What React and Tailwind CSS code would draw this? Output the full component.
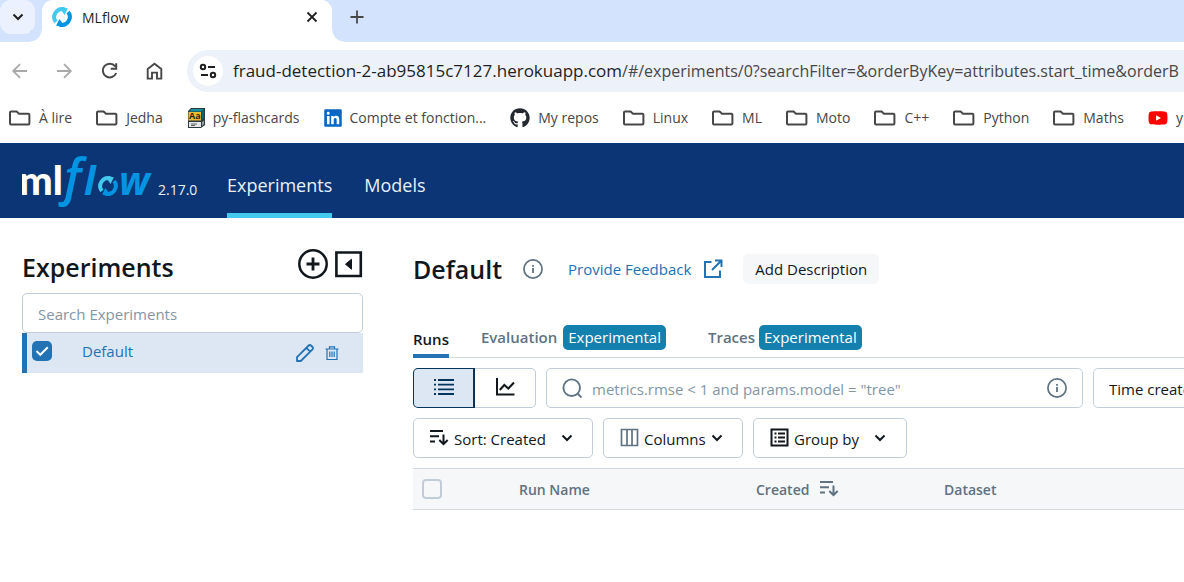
import React from "react";
import { FaGithub, FaLinkedin, FaYoutube } from "react-icons/fa";

function FolderIcon() {
  return (
    <svg className="h-5 w-[22px]" viewBox="0 0 22 20" fill="none" stroke="#474747" strokeWidth="2">
      <path d="M1 4.500a1 1 0 0 1 1-1h5.600l2.400 2.200h9.400a1 1 0 0 1 1 1v8.900a1 1 0 0 1-1 1H2a1 1 0 0 1-1-1z" />
    </svg>
  );
}

function CardsIcon() {
  return (
    <svg className="h-5 w-[18px]" viewBox="0 0 18 20">
      <path d="M4 0h14v17l-4 3H1V3z" fill="#2b3a3c" />
      <path d="M4.500 1H17l-3 2.500H2z" fill="#13929b" />
      <path d="M17 1.500v9l-2 1.500V3.800z" fill="#0a6670" />
      <path d="M1.500 4H14v8.500H1.500z" fill="#f0bb35" />
      <path d="M2 14h12v5H2z" fill="#e8e8e8" />
      <path d="M17 12.500V16l-2 2v-4z" fill="#9aa0a3" />
      <path d="M4 16h6M4 17.500h4" stroke="#5a6164" />
      <text x="2" y="11" fontSize="9" fontWeight="700" fill="#2b2b1a" fontFamily="Open Sans, sans-serif">Aa</text>
    </svg>
  );
}

function Ring({ className, ...rest }) {
  return (
    <svg className={className} viewBox="0 0 20 20" {...rest}>
      <path d="M3.900 15A8 8 0 0 1 12 2.300" fill="none" stroke="#43c9ed" strokeWidth="4" />
      <path d="M11 0l4.800 1.500L12.600 8 9.500 3.800z" fill="#43c9ed" />
      <path d="M16.100 5A8 8 0 0 1 8 17.700" fill="none" stroke="#0194e2" strokeWidth="4" />
      <path d="M9 20l-4.800-1.500L7.400 12l3.100 4.200z" fill="#0194e2" />
    </svg>
  );
}

function Chevron({ className = "h-4 w-4" }) {
  return (
    <svg className={className} viewBox="0 0 16 16" fill="none" stroke="currentColor" strokeWidth="2">
      <path d="M3.500 5.500 8 10l4.500-4.500" />
    </svg>
  );
}

function InfoIcon() {
  return (
    <svg className="h-5 w-5 shrink-0 text-[#5f7281]" viewBox="0 0 20 20" fill="none" stroke="currentColor">
      <circle cx="10" cy="10" r="9.100" strokeWidth="1.700" />
      <path d="M10 9v5M10 6v1.800" strokeWidth="1.800" />
    </svg>
  );
}

function SortIcon() {
  return (
    <svg className="h-5 w-5 shrink-0" viewBox="0 0 20 20" fill="none" stroke="currentColor" strokeWidth="2">
      <path d="M1 3h13M1 8.300h9M1 13.500h5M14.500 6.500V16M10.300 12l4.200 4.200 4.200-4.200" />
    </svg>
  );
}

function Logo() {
  return (
    <svg className="h-[52px] w-[132px]" viewBox="0 0 132 52" role="img" aria-label="mlflow" fontFamily="Open Sans, sans-serif">
      <text x="-3" y="40" fontSize="40" fontWeight="900" fill="#fff" fontFamily="Lato, sans-serif">ml</text>
      <g fill="#0194e2" fontStyle="italic">
        <text x="42" y="40" fontSize="50" fontWeight="600">f</text>
        <text x="62" y="40" fontSize="39" fontWeight="700">l</text>
        <text x="97" y="40" fontSize="39" fontWeight="700">w</text>
      </g>
      <Ring x="76" y="21" width="20" height="20" />
    </svg>
  );
}

const bookmarks = [
  { label: "À lire" },
  { label: "Jedha" },
  { label: "py-flashcards", icon: <CardsIcon /> },
  { label: "Compte et fonction...", icon: <FaLinkedin className="h-5 w-[18px] text-[#0a66c2]" /> },
  { label: "My repos", icon: <FaGithub className="h-5 w-5 text-[#24292f]" /> },
  { label: "Linux" },
  { label: "ML" },
  { label: "Moto" },
  { label: "C++" },
  { label: "Python" },
  { label: "Maths" },
  { label: "y", icon: <FaYoutube className="h-5 w-5 text-[#ff0000]" /> },
];

function Browser() {
  return (
    <div>
      <div className="flex h-[42px] bg-[#d3e3fd]">
        <button aria-label="Search tabs" className="flex h-[34px] w-[35px] items-center justify-center rounded-[11px] bg-[#ebf1fe] text-[#1f1f1f]">
          <Chevron />
        </button>
        <div className="relative ml-[7px] flex w-[290px] items-center rounded-t-[11px] bg-white pb-2 pl-[10px] pr-3">
          <span className="absolute -left-3 bottom-0 h-3 w-3 bg-[radial-gradient(circle_at_0_0,#d3e3fd_11px,#fff_12px)]" />
          <span className="absolute -right-3 bottom-0 h-3 w-3 bg-[radial-gradient(circle_at_100%_0,#d3e3fd_11px,#fff_12px)]" />
          <Ring className="h-5 w-5" />
          <span className="ml-[10px] flex-1 text-[14px] text-[#1f1f1f]">MLflow</span>
          <button aria-label="Close tab" className="flex h-4 w-4 items-center justify-center">
            <svg className="h-4 w-4" viewBox="0 0 16 16" stroke="#1f1f1f" strokeWidth="1.800">
              <path d="M3.500 3.500l9 9M12.500 3.500l-9 9" />
            </svg>
          </button>
        </div>
        <button aria-label="New tab" className="ml-[17px] flex h-[34px] w-4 items-center justify-center">
          <svg className="h-4 w-4" viewBox="0 0 16 16" stroke="#474747" strokeWidth="1.800">
            <path d="M8 1.500v13M1.500 8h13" />
          </svg>
        </button>
      </div>
      <div className="flex items-center pt-2">
        <div className="flex w-[187px] shrink-0 items-center gap-[25px] pl-[10px]">
          <button aria-label="Back">
            <svg className="h-5 w-5" viewBox="0 0 20 20" fill="none" stroke="#a9a9a9" strokeWidth="1.800">
              <path d="M17 10H3.500M10 3.200 3.200 10l6.800 6.800" />
            </svg>
          </button>
          <button aria-label="Forward">
            <svg className="h-5 w-5" viewBox="0 0 20 20" fill="none" stroke="#a9a9a9" strokeWidth="1.800">
              <path d="M2 10h13.500M9 3.200l6.800 6.800L9 16.800" />
            </svg>
          </button>
          <button aria-label="Reload">
            <svg className="h-5 w-5" viewBox="0 0 20 20" fill="none" stroke="#474747" strokeWidth="2">
              <path d="M15.200 5.300A6.900 6.900 0 1 0 16.200 12M16.200 2.300v5.500h-5.500" />
            </svg>
          </button>
          <button aria-label="Home">
            <svg className="h-5 w-5" viewBox="0 0 20 20" fill="none" stroke="#474747" strokeWidth="1.900">
              <path d="M2.700 8 9.500 2.700 16.300 8v9.600h-4.300v-6H7v6H2.700z" />
            </svg>
          </button>
        </div>
        <div className="flex h-[42px] flex-1 items-center overflow-hidden rounded-l-full bg-[#ecf1fa] pl-[6px]">
          <button aria-label="View site information" className="flex h-[30px] w-[30px] shrink-0 items-center justify-center rounded-full bg-white">
            <svg className="h-[18px] w-[18px]" viewBox="0 0 18 18" fill="none" stroke="#1f1f1f" strokeWidth="2">
              <circle cx="4" cy="5" r="2.200" />
              <path d="M9 5h7M2 13h7" />
              <circle cx="14" cy="13" r="2.200" />
            </svg>
          </button>
          <p className="ml-[10px] whitespace-nowrap text-[16px] text-[#474747]">
            <span className="text-[17px] text-[#1f1f1f]">fraud-detection-2-ab95815c7127.herokuapp.com</span>
            /#/experiments/0?searchFilter=&amp;orderByKey=attributes.start_time&amp;orderB
          </p>
        </div>
      </div>
      <nav aria-label="Bookmarks" className="flex h-[51px] items-center gap-6 overflow-hidden pl-[9px] text-[14px] text-[#474747]">
        {bookmarks.map((b) => (
          <a key={b.label} href="#" className="flex shrink-0 items-center gap-2 whitespace-nowrap">
            {b.icon || <FolderIcon />}
            {b.label}
          </a>
        ))}
      </nav>
    </div>
  );
}

function Sidebar() {
  return (
    <aside className="w-[341px] shrink-0 pt-7">
      <div className="flex h-[47px] items-start">
        <h2 className="flex-1 pt-[3px] text-[25px] font-semibold leading-9">Experiments</h2>
        <button aria-label="Create experiment" className="mt-[2px]">
          <svg className="h-8 w-8" viewBox="0 0 32 32" fill="none" stroke="currentColor" strokeWidth="2.500">
            <circle cx="16" cy="16" r="13.700" />
            <path d="M16 9.500v13M9.500 16h13" strokeWidth="2.800" />
          </svg>
        </button>
        <button aria-label="Hide sidebar" className="ml-[6px] mt-[2px]">
          <svg className="h-8 w-[28px]" viewBox="0 0 28 32" fill="none" stroke="currentColor" strokeWidth="2.600">
            <path d="M1.400 4.500h24.400v23.500H1.400z" />
            <path d="M16.500 11.200v10l-6-5z" fill="currentColor" strokeWidth="1" strokeLinejoin="round" />
          </svg>
        </button>
      </div>
      <input
        aria-label="Search Experiments"
        placeholder="Search Experiments"
        className="block h-10 w-full rounded-[5px] border border-[#c0cdd8] px-[15px] pt-[2px] text-[15px] placeholder:text-[#8396a5]"
      />
      <div className="flex h-10 items-center border-l-[5px] border-[#2272b4] bg-[#dce7f3] pb-1 pl-[5px] pr-6 text-[#2272b4]">
        <span className="grid">
          <input type="checkbox" defaultChecked aria-label="Select Default" className="col-start-1 row-start-1 h-5 w-5 appearance-none rounded-[5px] bg-[#2272b4]" />
          <svg className="pointer-events-none col-start-1 row-start-1 h-5 w-5" viewBox="0 0 20 20" fill="none" stroke="#fff" strokeWidth="2">
            <path d="M4.500 10l3.800 3.800 7.500-7.500" />
          </svg>
        </span>
        <a href="#" className="ml-[30px] flex-1 text-[15px]">Default</a>
        <button aria-label="Rename experiment" className="pt-1">
          <svg className="h-5 w-5" viewBox="0 0 20 20" fill="none" stroke="currentColor" strokeWidth="1.800" strokeLinejoin="round">
            <path d="M2 18v-3.800L13.700 2.500a1.600 1.600 0 0 1 2.300 0l1.500 1.500a1.600 1.600 0 0 1 0 2.300L5.800 18zM11.300 4.900l3.800 3.800" />
          </svg>
        </button>
        <button aria-label="Delete experiment" className="ml-[10px] pt-1">
          <svg className="h-4 w-[14px]" viewBox="0 0 14 16" fill="none" stroke="currentColor" strokeWidth="1.200">
            <path d="M.5 4h13M4.500 4V1.800h5V4M2 4v10.500h10V4M4.800 6.500v5.500M7 6.500v5.500M9.200 6.500v5.500" />
          </svg>
        </button>
      </div>
    </aside>
  );
}

function Badge() {
  return <span className="rounded-[5px] bg-[#1480ad] px-[5px] text-[15px] leading-[25px] text-white">Experimental</span>;
}

function Tabs() {
  return (
    <div role="tablist" className="mt-[41px] flex h-[33px] border-b border-[#d1d9e1] text-[15px] font-semibold text-[#5f7281]">
      <button role="tab" aria-selected="true" className="-mb-px border-b-4 border-[#2272b4] text-[#11171c]">Runs</button>
      <button role="tab" className="ml-8 flex items-center gap-[6px] pb-[7px] font-semibold">
        Evaluation <span className="flex font-normal"><Badge /></span>
      </button>
      <button role="tab" className="ml-[42px] flex items-center gap-[4px] pb-[7px] font-semibold">
        Traces <span className="flex font-normal"><Badge /></span>
      </button>
    </div>
  );
}

const outlined = "flex h-10 shrink-0 items-center rounded-[5px] border border-[#c0cdd8]";

function Filters() {
  return (
    <>
      <div className="mt-[10px] flex gap-[10px]">
        <div className="flex shrink-0">
          <button aria-label="Table view" className="flex h-10 w-[62px] items-center justify-center rounded-l-[5px] border border-r-2 border-[#04355d] bg-[#dce7f3] text-[#04355d]">
            <svg className="h-5 w-5" viewBox="0 0 20 20" stroke="currentColor" strokeWidth="1.800">
              <path d="M4 2h16M4 6.700h16M4 11.400h16M4 16h16M0 2h2M0 6.700h2M0 11.400h2M0 16h2" />
            </svg>
          </button>
          <button aria-label="Chart view" className="flex h-10 w-[61px] items-center justify-center rounded-r-[5px] border border-l-0 border-[#c0cdd8]">
            <svg className="h-5 w-5" viewBox="0 0 20 20" fill="none" stroke="currentColor" strokeWidth="2">
              <path d="M2 0v16.500h17.500M4.800 12l4.500-5 4 3.500 5.700-6" />
            </svg>
          </button>
        </div>
        <div className={outlined + " w-[537px] px-[15px]"}>
          <svg className="h-5 w-5 shrink-0 text-[#5f7281]" viewBox="0 0 20 20" fill="none" stroke="currentColor" strokeWidth="1.900">
            <circle cx="9.700" cy="9.700" r="8.300" />
            <path d="M15.500 15.500l4 4" />
          </svg>
          <input
            aria-label="Filter runs"
            placeholder={'metrics.rmse < 1 and params.model = "tree"'}
            className="ml-[10px] min-w-0 flex-1 pt-[3px] text-[15px] placeholder:text-[#8396a5]"
          />
          <InfoIcon />
        </div>
        <select aria-label="Time created" className={outlined + " w-[180px] appearance-none px-[15px] pt-[3px] text-[15px]"}>
          <option>Time created</option>
        </select>
      </div>
      <div className="mt-[10px] flex gap-[10px] text-[15px]">
        <button className={outlined + " w-[180px] pl-[15px]"}>
          <SortIcon />
          <span className="ml-[5px] pt-[2px]">Sort: Created</span>
          <Chevron className="ml-[13px] h-4 w-4" />
        </button>
        <button className={outlined + " w-[140px] pl-4"}>
          <svg className="h-5 w-5 shrink-0 text-[#5f7281]" viewBox="0 0 20 20" fill="none" stroke="currentColor" strokeWidth="1.700">
            <path d="M1.500 1.500h16v16h-16zM7 1.500v16M12 1.500v16" />
          </svg>
          <span className="ml-1 pt-[2px]">Columns</span>
          <Chevron className="ml-[3px] h-4 w-4" />
        </button>
        <button className={outlined + " w-[154px] pl-4"}>
          <svg className="h-5 w-5 shrink-0" viewBox="0 0 20 20" fill="none" stroke="currentColor" strokeWidth="2">
            <path d="M1.500 1.500h16v16h-16zM8 5.500h7M8 9.500h7M8 13.500h7M4.500 5.500h2M4.500 9.500h2M4.500 13.500h2" />
          </svg>
          <span className="ml-1 pt-[2px]">Group by</span>
          <Chevron className="ml-[13px] h-4 w-4" />
        </button>
      </div>
    </>
  );
}

function RunsTable() {
  return (
    <table className="mt-[10px] w-full table-fixed border-collapse text-left text-[14px] text-[#5f7281]">
      <thead>
        <tr className="h-[41px] border-y border-[#d1d9e1] bg-[#f6f7f9]">
          <th className="w-[106px] pl-[9px]">
            <input type="checkbox" aria-label="Select all runs" className="block h-5 w-5 appearance-none rounded-[4px] border-2 border-[#c0cdd8] bg-[#f6f7f9]" />
          </th>
          <th className="w-[237px] font-semibold">Run Name</th>
          <th className="w-[188px] font-semibold">
            <span className="flex items-center gap-[10px]">Created <SortIcon /></span>
          </th>
          <th className="font-semibold">Dataset</th>
        </tr>
      </thead>
    </table>
  );
}

export default function App() {
  return (
    <div className="min-h-screen overflow-hidden bg-white font-['Open_Sans',sans-serif] text-[#11171c]">
      <Browser />
      <header className="flex h-[75px] bg-[#0b3574] pl-[22px] text-[#e7f1fb]">
        <div className="flex w-[205px] shrink-0 items-start gap-1 pt-3">
          <Logo />
          <span className="pt-6 text-[14px]">2.17.0</span>
        </div>
        <nav className="flex gap-8 text-[18px]">
          <a href="#" className="flex items-center border-b-[5px] border-[#43c9ed] pt-4 pb-[2px]">Experiments</a>
          <a href="#" className="flex items-center border-b-[5px] border-transparent pt-4 pb-[2px]">Models</a>
        </nav>
      </header>
      <div className="flex gap-[50px] pl-[22px]">
        <Sidebar />
        <main className="min-w-0 flex-1 overflow-hidden pt-9">
          <div className="flex h-[30px] items-center text-[15px]">
            <h1 className="text-[25px] font-semibold leading-[30px]">Default</h1>
            <button aria-label="Experiment details" className="ml-[21px]">
              <InfoIcon />
            </button>
            <a href="#" className="ml-[25px] flex items-center gap-3 text-[#2272b4]">
              Provide Feedback
              <svg className="h-5 w-5" viewBox="0 0 20 20" fill="none" stroke="currentColor" strokeWidth="2">
                <path d="M8.500 3H2v15h15v-6.500M12 1.500h6.500V8M18 2l-9 9" />
              </svg>
            </a>
            <button className="ml-5 h-[30px] rounded-[5px] bg-[#f6f7f9] px-3">Add Description</button>
          </div>
          <Tabs />
          <Filters />
          <RunsTable />
        </main>
      </div>
    </div>
  );
}
